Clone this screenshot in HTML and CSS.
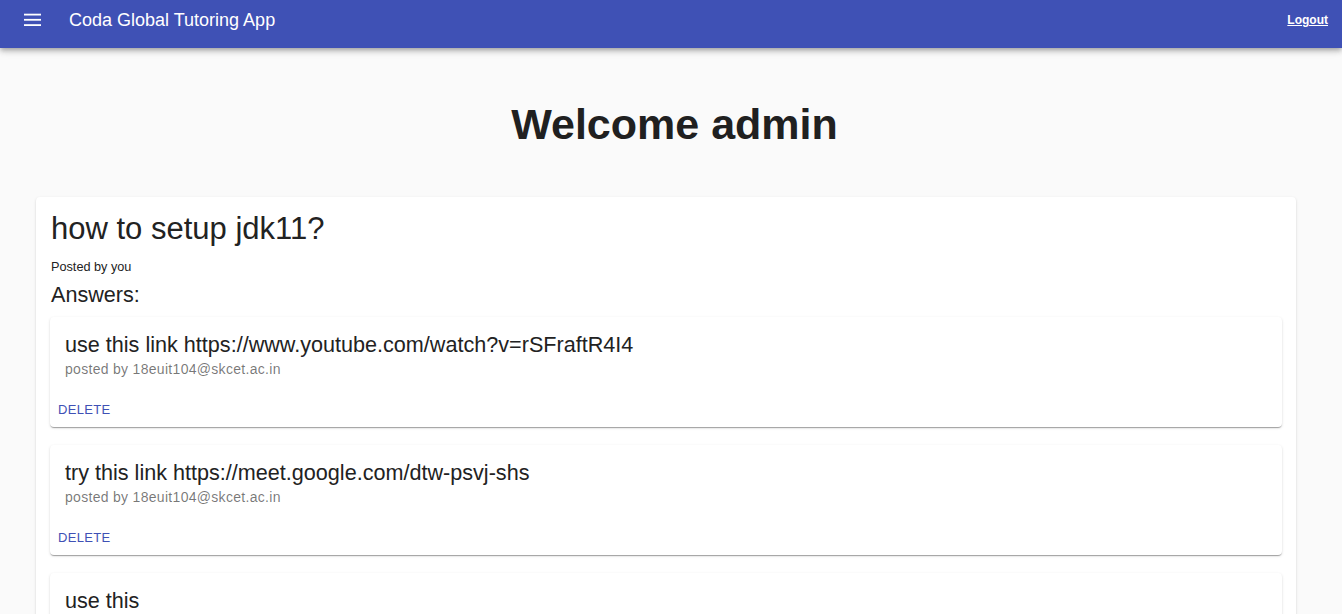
FILE: index.html
```html
<!DOCTYPE html>
<html>
<head>
<meta charset="utf-8">
<title>Coda Global Tutoring App</title>
<link rel="stylesheet" href="styles.css">
</head>
<body>
<header class="appbar">
  <button class="menu-btn" aria-label="menu">
    <svg width="18" height="14" viewBox="0 0 18 14"><rect x="0" y="0.7" width="17" height="1.8" fill="#fff"/><rect x="0" y="5.9" width="17" height="1.8" fill="#fff"/><rect x="0" y="11.2" width="17" height="1.8" fill="#fff"/></svg>
  </button>
  <div class="app-title">Coda Global Tutoring App</div>
  <a class="logout" href="#">Logout</a>
</header>
<main class="main">
  <h1 class="welcome">Welcome admin</h1>
  <section class="question-card">
    <h2 class="question-title">how to setup jdk11?</h2>
    <div class="posted-by">Posted by you</div>
    <div class="answers-label">Answers:</div>
    <div class="answers">
      <div class="answer-card">
        <div class="answer-text">use this link https://www.youtube.com/watch?v=rSFraftR4I4</div>
        <div class="answer-meta">posted by 18euit104@skcet.ac.in</div>
        <div class="answer-actions"><button class="delete-btn">Delete</button></div>
      </div>
      <div class="answer-card">
        <div class="answer-text">try this link https://meet.google.com/dtw-psvj-shs</div>
        <div class="answer-meta">posted by 18euit104@skcet.ac.in</div>
        <div class="answer-actions"><button class="delete-btn">Delete</button></div>
      </div>
      <div class="answer-card">
        <div class="answer-text">use this</div>
        <div class="answer-meta">posted by 18euit104@skcet.ac.in</div>
        <div class="answer-actions"><button class="delete-btn">Delete</button></div>
      </div>
    </div>
  </section>
</main>
</body>
</html>
```
FILE: styles.css
```css
* { box-sizing: border-box; }
html, body { margin: 0; padding: 0; }
body {
  background: #fafafa;
  font-family: "Liberation Sans", Arial, sans-serif;
  color: #212121;
  overflow: hidden;
}
.appbar {
  position: relative;
  z-index: 2;
  height: 48px;
  background: #3f51b5;
  display: flex;
  align-items: center;
  padding: 0 14px 8px 24px;
  box-shadow: 0px 2px 4px -1px rgba(0,0,0,0.2), 0px 4px 5px 0px rgba(0,0,0,0.14), 0px 1px 10px 0px rgba(0,0,0,0.12);
}
.menu-btn {
  background: none;
  border: 0;
  padding: 0;
  margin: 0;
  width: 18px;
  height: 14px;
  display: flex;
  cursor: pointer;
}
.app-title {
  margin-left: 27px;
  color: #fff;
  font-size: 18px;
  line-height: 20px;
  flex: 1;
}
.logout {
  color: #fff;
  font-weight: bold;
  font-size: 12px;
  text-decoration: underline;
}
.main {
  padding: 52px 46px 0 36px;
}
.welcome {
  margin: 0;
  text-align: center;
  font-size: 43px;
  line-height: 49px;
  font-weight: bold;
  color: #202020;
  padding-left: 17px;
}
.question-card {
  margin-top: 48px;
  background: #fff;
  border-radius: 4px;
  padding: 14px 15px 0 15px;
  box-shadow: 0px 2px 1px -1px rgba(0,0,0,0.2), 0px 1px 1px 0px rgba(0,0,0,0.14), 0px 1px 3px 0px rgba(0,0,0,0.12);
  min-height: 500px;
}
.question-title {
  margin: 0;
  font-weight: normal;
  font-size: 31px;
  line-height: 36px;
  color: #222;
}
.posted-by {
  margin-top: 12px;
  font-size: 12.7px;
  line-height: 16px;
  color: #222;
}
.answers-label {
  margin-top: 7px;
  font-size: 21.6px;
  line-height: 25px;
  color: #222;
}
.answers {
  margin: 10px -1px 0 -1px;
  display: flex;
  flex-direction: column;
  gap: 18px;
}
.answer-card {
  background: #fff;
  border-radius: 4px;
  box-shadow: 0px 2px 1px -1px rgba(0,0,0,0.2), 0px 1px 1px 0px rgba(0,0,0,0.14), 0px 1px 3px 0px rgba(0,0,0,0.12);
  height: 110px;
  padding: 15px 15px 0 15px;
}
.answer-text {
  font-size: 21.6px;
  line-height: 25px;
  color: #222;
}
.answer-meta {
  margin-top: 2px;
  font-size: 14px;
  line-height: 20px;
  letter-spacing: 0.3px;
  color: rgba(0,0,0,0.54);
}
.answer-actions {
  margin-top: 21px;
  margin-left: -7px;
}
.delete-btn {
  background: none;
  border: 0;
  padding: 0;
  font-family: "Liberation Sans", Arial, sans-serif;
  font-size: 13px;
  line-height: 16px;
  letter-spacing: 0.3px;
  text-transform: uppercase;
  color: #3f51b5;
  cursor: pointer;
}
```
